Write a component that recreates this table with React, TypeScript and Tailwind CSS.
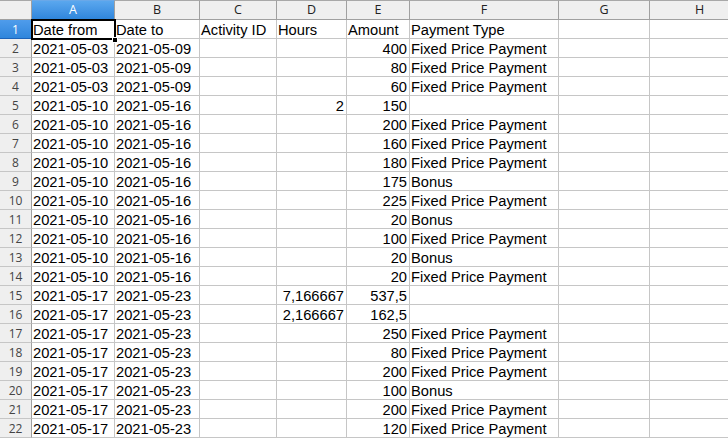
import React from "react";

const FPP = "Fixed Price Payment";
type Row = [string, string, string, string, string, string];
const rows: Row[] = [
  ["Date from", "Date to", "Activity ID", "Hours", "Amount", "Payment Type"],
  ["2021-05-03", "2021-05-09", "", "", "400", FPP],
  ["2021-05-03", "2021-05-09", "", "", "80", FPP],
  ["2021-05-03", "2021-05-09", "", "", "60", FPP],
  ["2021-05-10", "2021-05-16", "", "2", "150", ""],
  ["2021-05-10", "2021-05-16", "", "", "200", FPP],
  ["2021-05-10", "2021-05-16", "", "", "160", FPP],
  ["2021-05-10", "2021-05-16", "", "", "180", FPP],
  ["2021-05-10", "2021-05-16", "", "", "175", "Bonus"],
  ["2021-05-10", "2021-05-16", "", "", "225", FPP],
  ["2021-05-10", "2021-05-16", "", "", "20", "Bonus"],
  ["2021-05-10", "2021-05-16", "", "", "100", FPP],
  ["2021-05-10", "2021-05-16", "", "", "20", "Bonus"],
  ["2021-05-10", "2021-05-16", "", "", "20", FPP],
  ["2021-05-17", "2021-05-23", "", "7,166667", "537,5", ""],
  ["2021-05-17", "2021-05-23", "", "2,166667", "162,5", ""],
  ["2021-05-17", "2021-05-23", "", "", "250", FPP],
  ["2021-05-17", "2021-05-23", "", "", "80", FPP],
  ["2021-05-17", "2021-05-23", "", "", "200", FPP],
  ["2021-05-17", "2021-05-23", "", "", "100", "Bonus"],
  ["2021-05-17", "2021-05-23", "", "", "200", FPP],
  ["2021-05-17", "2021-05-23", "", "", "120", FPP],
];

const cols = ["A", "B", "C", "D", "E", "F", "G", "H"];

export default function App() {
  return (
    <div className="w-[728px] h-[439px] overflow-hidden bg-white relative" style={{ fontFamily: '"Liberation Sans", Arial, sans-serif' }}>
      <div className="grid grid-cols-[32px_83px_85px_77px_70px_63px_149px_91px_100px] w-[750px]">
        <div className="h-[20px] border-t border-t-[#a8a8a8] border-b border-b-[#a0a0a0] border-r border-r-[#a0a0a0] bg-[#efefef]" />
        {cols.map((c, i) => (
          <div
            key={c}
            className={
              "h-[20px] border-t border-b border-r flex items-center justify-center pt-[1px] text-[12.5px] leading-none " +
              (i === 0
                ? "border-t-[#6aa8e8] border-b-[#1d63b8] border-r-[#a0a0a0] bg-gradient-to-b from-[#5aa7ee] to-[#2f86dc] text-white"
                : "border-t-[#a8a8a8] border-b-[#a0a0a0] border-r-[#a0a0a0] bg-[#efefef] text-[#222]")
            }
            style={{ fontFamily: '"Open Sans", "DejaVu Sans", sans-serif' }}
          >
            {c}
          </div>
        ))}
        {rows.map((r, ri) => (
          <React.Fragment key={ri}>
            <div
              className={
                "h-[19px] border-b border-r flex items-center justify-center pt-[1px] text-[12px] leading-none " +
                (ri === 0
                  ? "bg-gradient-to-b from-[#4f9ceb] to-[#2f86dc] text-white border-b-[#1d63b8] border-r-[#a0a0a0]"
                  : "bg-[#efefef] text-[#444] border-b-[#c6c6c6] border-r-[#a0a0a0]")
              }
              style={{ fontFamily: '"Open Sans", "DejaVu Sans", sans-serif' }}
            >
              {ri + 1}
            </div>
            {r.map((v, ci) => {
              const num = ri > 0 && (ci === 3 || ci === 4);
              return (
                <div
                  key={ci}
                  className={
                    "h-[19px] border-b border-r border-[#c6c6c6] text-[14.7px] leading-[20px] text-black whitespace-nowrap overflow-visible " +
                    (num ? "text-right pr-[2px]" : "pl-[1px]")
                  }
                >
                  {v}
                </div>
              );
            })}
            <div className="h-[19px] border-b border-r border-[#c6c6c6]" />
            <div className="h-[19px] border-b border-r border-[#c6c6c6]" />
          </React.Fragment>
        ))}
      </div>
      <div className="absolute left-[31px] top-[19px] w-[85px] h-[21px] border-2 border-black pointer-events-none" />
      <div className="absolute left-[112px] top-[37px] w-[6px] h-[6px] bg-black border border-white pointer-events-none" />
    </div>
  );
}
